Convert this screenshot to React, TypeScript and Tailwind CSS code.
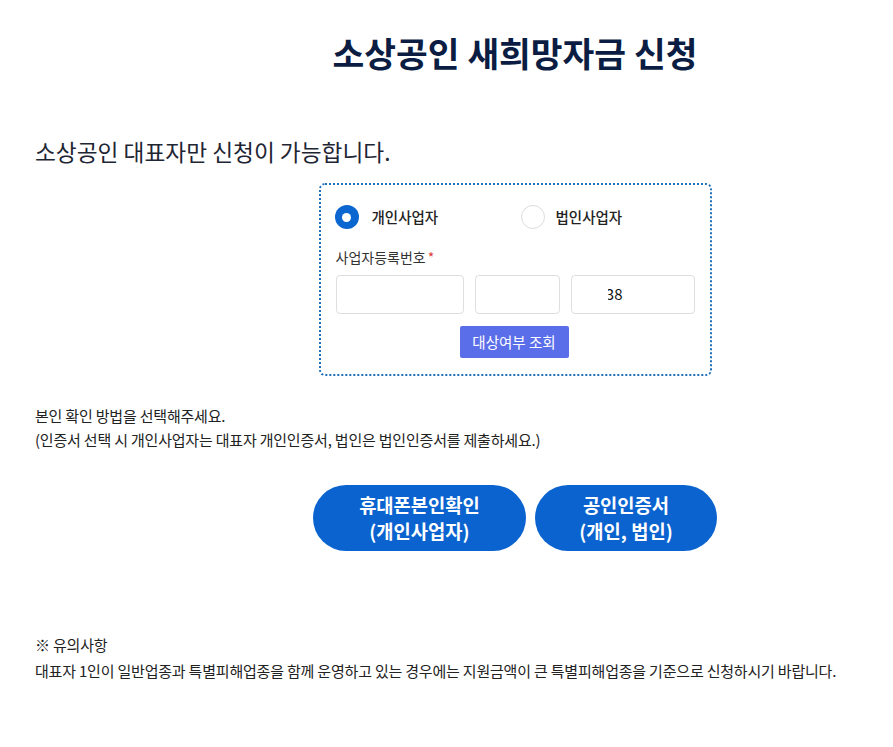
import React from "react";

export default function App() {
  const font = { fontFamily: '"Noto Sans CJK KR", "Noto Sans", sans-serif' };
  return (
    <div className="w-full overflow-x-hidden bg-white min-h-[747px]" style={font}>
      <div className="w-[960px] ml-[35px] pt-[30px] pb-[40px]">
        <h1 className="h-[44px] leading-[44px] text-center text-[34.5px] font-bold text-[#0b1d42]">
          소상공인 새희망자금 신청
        </h1>
        <p className="mt-[63px] h-[30px] leading-[30px] text-[22.7px] text-[#1e2533]">
          소상공인 대표자만 신청이 가능합니다.
        </p>
        <div className="mt-[16px] mx-auto w-[393px] h-[193px] border-2 border-dotted border-[#1f6fb8] rounded-[6px] px-[15px] pt-[20px] pb-[16px]">
          <div className="flex items-center h-[24px]">
            <div className="flex items-center w-[186px] -ml-[1px]">
              <span className="w-[24px] h-[24px] rounded-full bg-[#0b66d0] flex items-center justify-center">
                <span className="w-[9px] h-[9px] rounded-full bg-white" />
              </span>
              <span className="ml-[13px] text-[14.5px] font-medium text-[#222]">개인사업자</span>
            </div>
            <div className="flex items-center">
              <span className="w-[24px] h-[24px] rounded-full border border-[#dcdcdc] bg-white" />
              <span className="ml-[11px] text-[14.5px] font-medium text-[#222]">법인사업자</span>
            </div>
          </div>
          <div className="mt-[18px] h-[20px] leading-[20px] text-[14px] text-[#333]">
            사업자등록번호<span className="text-[#e03a3a] ml-[2px]">*</span>
          </div>
          <div className="mt-[8px] flex gap-[11px]">
            <div className="w-[128px] h-[39px] border border-[#dedede] rounded-[4px]" />
            <div className="w-[85px] h-[39px] border border-[#dedede] rounded-[4px]" />
            <div className="w-[124px] h-[39px] border border-[#dedede] rounded-[4px] flex items-center pl-[36px]">
              <div className="w-[60px] overflow-hidden text-[15px] text-[#111] whitespace-nowrap">
                <span className="inline-block -ml-[10px]">338</span>
              </div>
            </div>
          </div>
          <div className="mt-[12px] flex justify-center">
            <button className="w-[109px] h-[32px] bg-[#5b6ee9] rounded-[2px] text-white text-[14.5px] -ml-[2px]">
              대상여부 조회
            </button>
          </div>
        </div>
        <div className="mt-[28px] text-[15px] leading-[24px] text-[#222] tracking-[-0.2px]">
          <p>본인 확인 방법을 선택해주세요.</p>
          <p>(인증서 선택 시 개인사업자는 대표자 개인인증서, 법인은 법인인증서를 제출하세요.)</p>
        </div>
        <div className="mt-[33px] flex justify-center gap-[9px]">
          <button className="w-[213px] h-[66px] rounded-full bg-[#0a63cf] text-white text-[18.75px] font-bold leading-[26px]">
            휴대폰본인확인
            <br />
            (개인사업자)
          </button>
          <button className="w-[182px] h-[66px] rounded-full bg-[#0a63cf] text-white text-[18.75px] font-bold leading-[26px]">
            공인인증서
            <br />
            (개인, 법인)
          </button>
        </div>
        <div className="mt-[81px] text-[15px] leading-[26px] text-[#222] tracking-[-0.2px]">
          <p>※ 유의사항</p>
          <p>대표자 1인이 일반업종과 특별피해업종을 함께 운영하고 있는 경우에는 지원금액이 큰 특별피해업종을 기준으로 신청하시기 바랍니다.</p>
        </div>
      </div>
    </div>
  );
}
